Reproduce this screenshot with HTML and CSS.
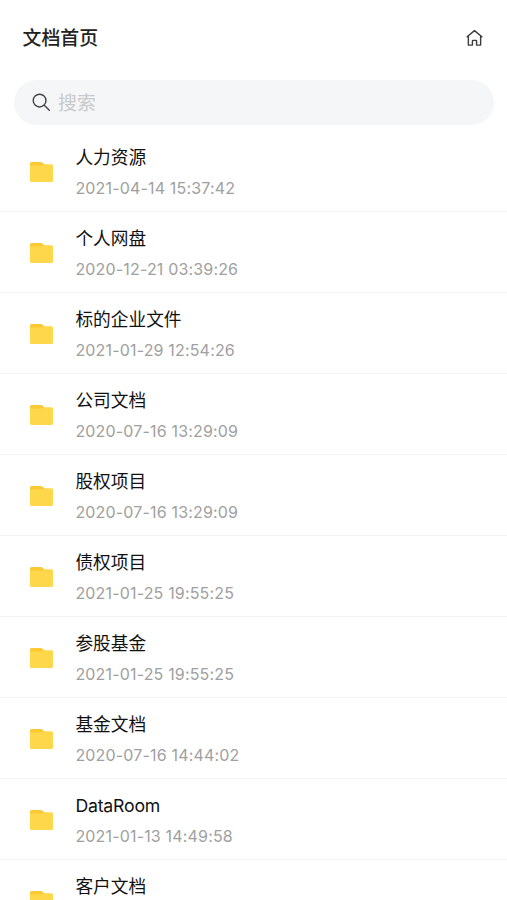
FILE: index.html
```html
<!DOCTYPE html>
<html lang="zh-CN">
<head>
<meta charset="utf-8">
<title>文档首页</title>
<link rel="stylesheet" href="styles.css">
</head>
<body>
<svg class="defs" width="0" height="0" aria-hidden="true"><symbol id="folder" viewBox="0 0 23 20"><path fill="#fac934" d="M1.500 0h9.300q.8 0 1.400.5L14.500 2.300V8H0V1.500Q0 0 1.500 0z"/><path fill="#ffd74a" d="M0 4.200q0-.8 1-.8h10.500q1 0 1.700-.6l.7-.5h7.600q1.500 0 1.500 1.500v14.700q0 1.500-1.500 1.500h-20Q0 20 0 18.500z"/></symbol></svg>
<header class="header"><h1>文档首页</h1><svg class="home" viewBox="0 0 18 18"><path d="M1.200 7.600 9 1.200l7.800 6.400M2.500 6.800v9.700h4.300v-4.300q0-.7.700-.7h3q.7 0 .7.700v4.300h4.300V6.800"/></svg></header>
<div class="search"><svg class="glass" viewBox="0 0 20 20"><circle cx="8" cy="8" r="6.700"/><path d="m12.900 12.900 5.300 5.300"/></svg><span>搜索</span></div>
<ul class="list">
<li><svg class="folder"><use href="#folder"/></svg><div><h2>人力资源</h2><time>2021-04-14 15:37:42</time></div></li>
<li><svg class="folder"><use href="#folder"/></svg><div><h2>个人网盘</h2><time>2020-12-21 03:39:26</time></div></li>
<li><svg class="folder"><use href="#folder"/></svg><div><h2>标的企业文件</h2><time>2021-01-29 12:54:26</time></div></li>
<li><svg class="folder"><use href="#folder"/></svg><div><h2>公司文档</h2><time>2020-07-16 13:29:09</time></div></li>
<li><svg class="folder"><use href="#folder"/></svg><div><h2>股权项目</h2><time>2020-07-16 13:29:09</time></div></li>
<li><svg class="folder"><use href="#folder"/></svg><div><h2>债权项目</h2><time>2021-01-25 19:55:25</time></div></li>
<li><svg class="folder"><use href="#folder"/></svg><div><h2>参股基金</h2><time>2021-01-25 19:55:25</time></div></li>
<li><svg class="folder"><use href="#folder"/></svg><div><h2>基金文档</h2><time>2020-07-16 14:44:02</time></div></li>
<li><svg class="folder"><use href="#folder"/></svg><div><h2 class="latin">DataRoom</h2><time>2021-01-13 14:49:58</time></div></li>
<li><svg class="folder"><use href="#folder"/></svg><div><h2>客户文档</h2></div></li>
</ul>
</body>
</html>
```

FILE: styles.css
```css
* { box-sizing: border-box; }
body { margin: 0; height: 900px; overflow: hidden; background: #fff; color: #111; font-family: Inter, "Noto Sans CJK SC", sans-serif; }
.defs { display: block; }
.header { display: flex; justify-content: space-between; align-items: center; height: 76px; padding: 0 24.500px 0 22.500px; }
h1 { margin: 2px 0 0; color: #222; font-size: 18.900px; font-weight: 500; line-height: 28px; }
.home { width: 17px; height: 18px; fill: none; stroke: #3c3c3c; stroke-width: 1.500; stroke-linejoin: round; stroke-linecap: round; }
.search { display: flex; align-items: center; gap: 7px; height: 45px; margin: 4px 13px 6px 14px; padding-left: 18px; border-radius: 23px; background: #f4f6f8; color: #c8c9cb; font-size: 18.900px; }
.search span { margin-top: -2px; }
.glass { width: 19px; height: 19px; fill: none; stroke: #444; stroke-width: 1.500; stroke-linecap: round; }
.list { margin: 0; padding: 0; list-style: none; }
.list li { display: flex; gap: 22.400px; height: 81px; padding: 14px 0 0 30px; border-bottom: 1px solid #f3f3f3; }
.folder { flex: none; width: 23px; height: 20px; margin-top: 17px; }
h2 { margin: 0; font-size: 17.700px; font-weight: 400; line-height: 26px; }
.latin { letter-spacing: -.2px; }
time { display: block; margin-top: 6px; color: #a0a0a0; font-size: 16px; line-height: 22px; letter-spacing: .17px; }
```
